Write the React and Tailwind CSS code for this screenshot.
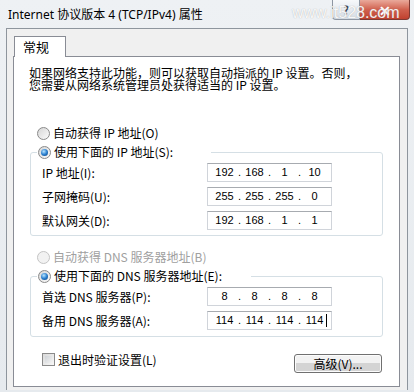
import React from 'react';

const CJK = "font-['Noto_Sans_CJK_SC','Noto_Sans',sans-serif]";

// Win7 style radio button
const Radio = ({ checked = false, disabled = false }) => (
  <span
    className={`flex h-[13px] w-[13px] shrink-0 items-center justify-center rounded-full border ${
      disabled ? 'border-[#c4c4c4] bg-[#f2f2f2]' : 'border-[#8a8a8a] bg-linear-to-br from-[#d6d6d6] to-[#fbfbfb]'
    }`}
  >
    {checked && (
      <span className="h-[7px] w-[7px] rounded-full bg-[radial-gradient(circle_at_40%_35%,#b9e6ff,#2a7fcf_50%,#0a3d75)]" />
    )}
  </span>
);

const RadioRow = ({ label, checked, disabled }) => (
  <div className="flex h-[16px] items-center gap-[3px]">
    <Radio checked={checked} disabled={disabled} />
    <span className={`text-[12px] leading-[16px] ${disabled ? 'text-[#a0a0a0]' : 'text-black'}`}>{label}</span>
  </div>
);

// IP address control: four fields separated by dots
const IpBox = ({ parts, caret = false }) => (
  <div className="flex h-[19px] w-[125px] items-center border border-[#d0d4da] border-t-[#a7abb0] bg-white pl-[4px] font-['Liberation_Sans',sans-serif] text-[11px] leading-[17px] text-black">
    {parts.map((p, i) => (
      <React.Fragment key={i}>
        {i > 0 && <span className="w-[5px] text-center">.</span>}
        <span className="relative w-[25px] text-center">
          {p}
          {caret && i === parts.length - 1 && (
            <span className="absolute right-[0px] top-[2px] h-[13px] w-[1px] bg-black" />
          )}
        </span>
      </React.Fragment>
    ))}
  </div>
);

const FieldRow = ({ label, parts, caret }) => (
  <div className="flex h-[19px] items-center">
    <span className="w-[175px] pl-[10px] text-[12px] leading-[19px]">{label}</span>
    <IpBox parts={parts} caret={caret} />
  </div>
);

const Group = ({ legend, legendWidth, children }) => (
  <div className="rounded-[3px] border border-[#d5dfe5] px-[1px]">
    <div className={`-mt-[9px] ml-[5px] flex h-[16px] items-center bg-white pl-[1px] ${legendWidth}`}>
      <RadioRow label={legend} checked />
    </div>
    {children}
  </div>
);

export default function App() {
  return (
    <div className={`relative h-[392px] w-[414px] overflow-hidden bg-linear-to-b from-[#eef1f4] to-[#e6eaee] ${CJK}`}>
      {/* Title bar */}
      <div className="flex h-[28px] items-start justify-between">
        <span className="pl-[8px] pt-[7px] font-['Noto_Sans','Noto_Sans_CJK_SC',sans-serif] text-[12px] leading-[16px] text-black">
          Internet 协议版本 4 (TCP/IPv4) 属性
        </span>
        <div className="mr-[4px] flex h-[20px]">
          <div className="flex w-[28px] items-center justify-center rounded-bl-[4px] border border-t-0 border-[#8d96a2] bg-linear-to-b from-[#f6f8fa] to-[#d7dee6] text-[12px] font-bold leading-none text-[#3c4a5a]">
            ?
          </div>
          <div className="flex w-[50px] items-center justify-center rounded-br-[4px] border border-l-0 border-t-0 border-[#7d3a34] bg-linear-to-b from-[#e9a99b] via-[#d0614f] to-[#c0402f] text-[14px] font-bold leading-none text-white">
            ✕
          </div>
        </div>
      </div>

      {/* watermark over the caption buttons */}
      <span className="absolute left-[292px] top-[3px] font-['Liberation_Sans',sans-serif] text-[16px] leading-[20px] text-white/90 [text-shadow:0_0_1px_rgba(120,120,120,0.6)]">
        www.it528.com
      </span>

      {/* Client area */}
      <div className="mx-[6px] h-[362px] w-[402px] border border-b-0 border-[#8e959d] bg-[#f0f0f0] pl-[6px] pr-[7px] pt-[7px]">
        {/* Tab header */}
        <div className="flex">
          <div className="relative z-10 -mb-[1px] ml-[1px] flex h-[21px] w-[52px] items-start border border-b-0 border-[#898c95] bg-white pl-[8px] pt-[2px] text-[13px] leading-[16px]">
            常规
          </div>
        </div>

        {/* Tab panel */}
        <div className="h-[331px] border border-[#898c95] bg-white px-[16px] text-black">
          <p className="ml-[-1px] mt-[10px] text-[12px] leading-[12px]">
            如果网络支持此功能，则可以获取自动指派的 IP 设置。否则，
            <br />
            您需要从网络系统管理员处获得适当的 IP 设置。
          </p>

          <div className="ml-[7px] mt-[34px]">
            <RadioRow label="自动获得 IP 地址(O)" />
          </div>

          <div className="mt-[11px]">
            <Group legend="使用下面的 IP 地址(S):" legendWidth="w-[174px]">
              <div className="mt-[3px] flex flex-col gap-[5px] pb-[5px]">
                <FieldRow label="IP 地址(I):" parts={['192', '168', '1', '10']} />
                <FieldRow label="子网掩码(U):" parts={['255', '255', '255', '0']} />
                <FieldRow label="默认网关(D):" parts={['192', '168', '1', '1']} />
              </div>
            </Group>
          </div>

          <div className="ml-[7px] mt-[13px]">
            <RadioRow label="自动获得 DNS 服务器地址(B)" disabled />
          </div>

          <div className="mt-[11px]">
            <Group legend="使用下面的 DNS 服务器地址(E):" legendWidth="w-[214px]">
              <div className="mt-[3px] flex flex-col gap-[5px] pb-[6px]">
                <FieldRow label="首选 DNS 服务器(P):" parts={['8', '8', '8', '8']} />
                <FieldRow label="备用 DNS 服务器(A):" parts={['114', '114', '114', '114']} caret />
              </div>
            </Group>
          </div>

          <div className="flex items-start justify-between pr-[1px]">
            <div className="ml-[12px] mt-[16px] flex items-center gap-[3px]">
              <span className="h-[13px] w-[13px] border border-[#8a8a8a] bg-linear-to-br from-[#d9d9d9] to-[#f8f8f8] p-[2px]">
                <span className="block h-full w-full bg-linear-to-br from-[#cfd3d7] to-[#f2f2f2]" />
              </span>
              <span className="text-[12px] leading-[13px]">退出时验证设置(L)</span>
            </div>
            <button className="mt-[17px] flex h-[19px] w-[88px] items-center justify-center rounded-[3px] border border-[#707070] bg-linear-to-b from-[#f2f2f2] from-50% to-[#d4d4d4] to-50% text-[12px] leading-[17px] text-black shadow-[inset_0_0_0_1px_#fcfcfc]">
              高级(V)...
            </button>
          </div>
        </div>
      </div>
    </div>
  );
}
